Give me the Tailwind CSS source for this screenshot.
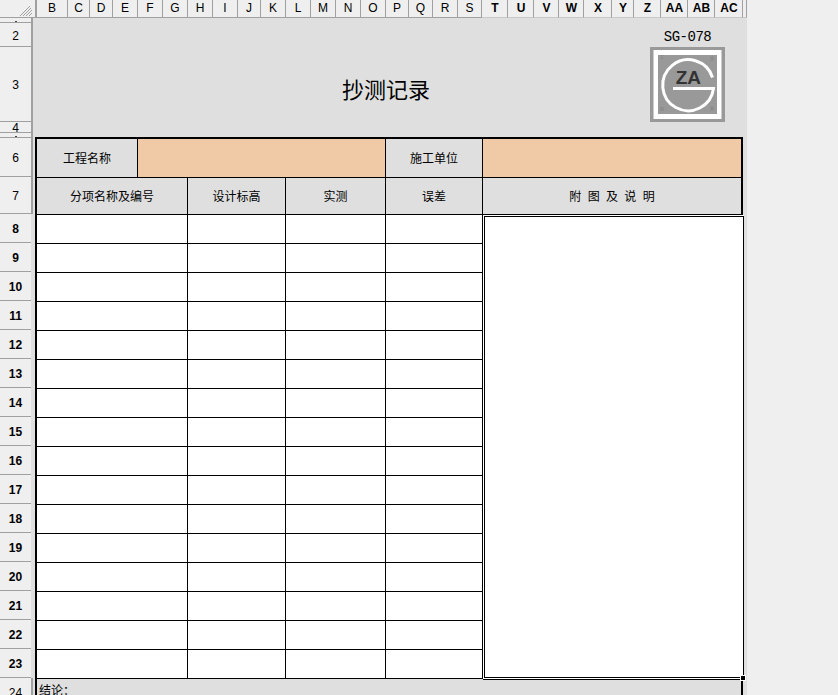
<!DOCTYPE html>
<html lang="zh-CN">

<head>
    <meta charset="UTF-8">
    <title>抄测记录</title>
    <script src="https://cdn.jsdelivr.net/npm/@tailwindcss/browser@4"></script>
</head>

<body class="w-[838px] h-[695px] overflow-hidden bg-[#efefef] text-black font-['Liberation_Sans','Noto_Sans_CJK_SC',sans-serif]">
    <!-- Column letters -->
    <div id="col-head" class="flex h-[18px] w-[748px] text-xs leading-[17px]">
        <div class="w-[37px] h-[18px] shrink-0 border-r-2 border-b border-[#a0a0a0] flex justify-end">
            <svg width="35" height="17" viewBox="0 0 35 17" class="shrink-0">
                <path d="M20 16 L30 6 M23 16 L31 8 M26 16 L32 10 M29 16 L32 13" stroke="#a0a0a0" stroke-width="1" fill="none" />
            </svg>
        </div>
    </div>

    <div class="flex">
        <!-- Row numbers -->
        <div id="row-head" class="w-[33px] shrink-0 text-xs leading-none text-center bg-[#dfdfdf]"></div>

        <!-- Sheet -->
        <div class="w-[714px] h-[677px] overflow-hidden bg-[#dfdfdf]">
            <div class="flex h-[119px] pl-[309px]">
                <div class="w-[88px] pt-[55px] text-[22px] leading-[30px] whitespace-nowrap font-['Noto_Sans_CJK_SC',sans-serif]">抄测记录</div>
                <div class="ml-[220px] w-[75px]">
                    <div class="h-[29px] pt-[10px] text-center text-sm leading-[18px] tracking-[-0.5px] font-['Liberation_Mono',monospace]">SG-078</div>
                    <svg width="75" height="75" viewBox="0 0 75 75" class="block">
                        <rect width="75" height="75" fill="#999999" />
                        <rect x="3.5" y="3" width="68" height="69" fill="#ffffff" />
                        <rect x="8" y="8" width="59" height="59" fill="#999999" />
                        <path d="M23 41.5 H63.5 A25.5 25.5 0 1 1 62.5 30.5" fill="none" stroke="#ffffff" stroke-width="3" />
                        <text x="38.3" y="37" text-anchor="middle" font-family="Liberation Sans" font-weight="700" font-size="19" fill="#333333">ZA</text>
                        <text x="10" y="12" font-size="4" fill="#808080">工</text>
                        <text x="60" y="14" font-size="4" fill="#808080">质</text>
                        <text x="10" y="64" font-size="4" fill="#808080">程</text>
                        <text x="60" y="63" font-size="4" fill="#808080">量</text>
                    </svg>
                </div>
            </div>

            <!-- Form table -->
            <div class="relative w-[708px] ml-[2px] border-x-2 border-t-2 border-black text-xs">
                <div class="grid grid-cols-[101px_248px_97px_1fr] h-[39px] border-b border-black">
                    <div class="flex items-center justify-center pt-[2px] border-r border-black">工程名称</div>
                    <div class="border-r border-black bg-[#f0c9a6]"></div>
                    <div class="flex items-center justify-center pt-[2px] border-r border-black">施工单位</div>
                    <div class="bg-[#f0c9a6]"></div>
                </div>
                <div class="grid grid-cols-[151px_98px_100px_97px_1fr] h-[37px] border-b border-black">
                    <div class="flex items-center justify-center pt-[2px] border-r border-black">分项名称及编号</div>
                    <div class="flex items-center justify-center pt-[2px] border-r border-black">设计标高</div>
                    <div class="flex items-center justify-center pt-[2px] border-r border-black">实测</div>
                    <div class="flex items-center justify-center pt-[2px] border-r border-black">误差</div>
                    <div class="flex items-center justify-center pt-[2px] [word-spacing:3px]">附 图 及 说 明</div>
                </div>
                <div class="flex">
                    <div id="rows" class="w-[446px] bg-white"></div>
                    <div class="flex-1 bg-white"></div>
                </div>
                <div class="pl-[2px] pt-[3px] text-xs leading-[18px] h-[30px]">结论：</div>

                <!-- Selected merged cell -->
                <div class="absolute left-[446px] top-[76px] w-[261px] h-[465px] pl-px pt-px pb-px bg-white border-b border-black">
                    <div class="h-full border border-black"></div>
                </div>
                <div class="absolute left-[703px] top-[536px] w-[6px] h-[6px] bg-black border border-white"></div>
            </div>
        </div>
    </div>

    <script>
        // column letters and their widths in the sheet
        const cols = [['B', 31], ['C', 22], ['D', 23], ['E', 25], ['F', 25], ['G', 25], ['H', 25], ['I', 25], ['J', 23], ['K', 25], ['L', 25], ['M', 25], ['N', 25], ['O', 25], ['P', 23], ['Q', 24], ['R', 25], ['S', 24],
            ['T', 26], ['U', 26], ['V', 25], ['W', 25], ['X', 28], ['Y', 22], ['Z', 27], ['AA', 27], ['AB', 27], ['AC', 28]];
        const colHead = document.getElementById('col-head');
        cols.forEach(([name, width], i) => {
            const cell = document.createElement('div');
            cell.className = i >= 18
                ? 'shrink-0 h-[18px] pl-px text-center font-bold border-r border-[#a0a0a0] border-b border-b-[#c8c8c8]'
                : 'shrink-0 h-[18px] text-center border-r border-[#a0a0a0] border-b';
            cell.style.width = width + 'px';
            cell.textContent = name;
            colHead.appendChild(cell);
        });
        const tail = document.createElement('div');
        tail.className = 'w-[4px] h-[18px] border-r border-b border-[#a0a0a0] border-b-[#c8c8c8]';
        colHead.appendChild(tail);

        // row numbers: [label, height]; the two squeezed rows only show a speck
        const rowNums = [['', 5], ['2', 24], ['3', 75], ['4', 11], ['', 5], ['6', 39], ['7', 37]];
        for (let n = 8; n <= 23; n++) rowNums.push([String(n), 29]);
        rowNums.push(['24', 29]);
        const rowHead = document.getElementById('row-head');
        rowNums.forEach(([label, height]) => {
            const cell = document.createElement('div');
            const selected = Number(label) >= 8 && Number(label) <= 23;
            cell.className = selected
                ? 'flex items-center justify-center w-[31px] pt-[2px] bg-[#efefef] font-bold border-b border-[#a0a0a0]'
                : 'flex items-center justify-center w-[33px] pt-[2px] overflow-hidden bg-[#efefef] border-r-2 border-b border-[#a0a0a0]';
            cell.style.height = height + 'px';
            if (label) {
                cell.textContent = label;
            } else {
                const speck = document.createElement('span');
                speck.className = 'block w-[2px] h-[1px] bg-[#444444]';
                cell.appendChild(speck);
            }
            rowHead.appendChild(cell);
        });

        // 16 empty rows of the survey table
        const rows = document.getElementById('rows');
        for (let n = 0; n < 16; n++) {
            const row = document.createElement('div');
            row.className = 'grid grid-cols-[151px_98px_100px_97px] h-[29px] border-b border-black';
            for (let c = 0; c < 4; c++) {
                const cell = document.createElement('div');
                cell.className = 'border-r border-black';
                row.appendChild(cell);
            }
            rows.appendChild(row);
        }
    </script>
</body>

</html>
